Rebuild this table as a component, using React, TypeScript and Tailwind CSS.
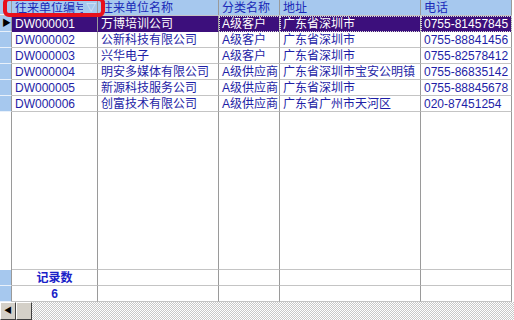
const cols = [86, 121, 61, 141, 91];

const rows = [
	["DW000001", "万博培训公司", "A级客户", "广东省深圳市", "0755-81457845"],
	["DW000002", "公新科技有限公司", "A级客户", "广东省深圳市", "0755-88841456"],
	["DW000003", "兴华电子", "A级客户", "广东省深圳市", "0755-82578412"],
	["DW000004", "明安多媒体有限公司", "A级供应商", "广东省深圳市宝安公明镇", "0755-86835142"],
	["DW000005", "新源科技服务公司", "A级供应商", "广东省深圳市", "0755-88845678"],
	["DW000006", "创富技术有限公司", "A级供应商", "广东省广州市天河区", "020-87451254"],
];

const headers = ["往来单位编号", "往来单位名称", "分类名称", "地址", "电话"];

function Indicator({ blue, active }: { blue: boolean; active?: boolean }) {
	return (
		<div
			className={`w-[12px] shrink-0 h-full flex items-center border-r border-[#9a9a9a] ${
				blue ? "bg-[#a6c8ee] border-b border-b-[#e8f0fa]" : "bg-white"
			}`}
		>
			{active && <span className="text-[9px] leading-none ml-[2px] text-black">▶</span>}
		</div>
	);
}

export default function App() {
	return (
		<div
			className="relative w-[514px] h-[320px] bg-white overflow-hidden text-[12px] leading-none text-[#1e1ea6]"
			style={{ fontFamily: '"Liberation Sans", "Noto Sans CJK SC", sans-serif' }}
		>
			<div className="w-[512px] h-[302px] flex flex-col border-r border-[#b4b4b4]">
				{/* header */}
				<div className="flex h-[16px] bg-[#a6c8ee] border-b border-[#c4c4c4]">
					<Indicator blue />
					{headers.map((h, i) => (
						<div
							key={h}
							style={{ width: cols[i] }}
							className="shrink-0 h-full border-r border-[#9a9a9a] flex items-center pl-[3px] overflow-hidden whitespace-nowrap text-[#1a2ab8]"
						>
							{i === 0 ? (
								<>
									<span className="w-[68px] shrink-0 overflow-hidden">{h}</span>
									<span className="text-[10px] text-[#e8eef8] ml-[3px]">▽</span>
								</>
							) : (
								h
							)}
						</div>
					))}
				</div>
				{/* data rows */}
				{rows.map((r, ri) => {
					const sel = ri === 0;
					return (
						<div key={r[0]} className="flex h-[16px]">
							<Indicator blue active={sel} />
							{r.map((c, ci) => (
								<div
									key={ci}
									style={{ width: cols[ci] }}
									className={`shrink-0 h-full flex items-center pl-[3px] whitespace-nowrap overflow-hidden border-r border-b ${
										sel
											? "bg-[#3c0f7c] text-white border-b-[#3c0f7c] border-r-[#9a9a9a]"
											: "border-r-[#9a9a9a] border-b-[#c4c4c4]"
									} ${sel && ci >= 2 ? "outline-1 outline-dotted outline-[#d8d8d8] -outline-offset-1" : ""}`}
								>
									{c}
								</div>
							))}
						</div>
					);
				})}
				{/* empty area */}
				<div className="flex flex-1">
					<div className="w-[12px] shrink-0 border-r border-[#9a9a9a]" />
					{cols.map((w, i) => (
						<div key={i} style={{ width: w }} className="shrink-0 border-r border-[#9a9a9a] border-b border-b-[#c4c4c4]" />
					))}
				</div>
				{/* footer */}
				{["记录数", "6"].map((t) => (
					<div key={t} className="flex h-[16px] font-bold text-[#1a22c8]">
						<Indicator blue />
						{cols.map((w, i) => (
							<div
								key={i}
								style={{ width: w }}
								className="shrink-0 h-full flex items-center justify-center border-r border-[#9a9a9a] border-b border-b-[#c4c4c4]"
							>
								{i === 0 ? t : ""}
							</div>
						))}
					</div>
				))}
			</div>
			{/* horizontal scrollbar */}
			<div className="flex h-[18px] bg-[repeating-conic-gradient(#c8c8c8_0%_25%,#ffffff_0%_50%)] bg-[length:2px_2px]">
				<div className="w-[16px] h-full bg-[#d4d0c8] border border-t-white border-l-white border-r-[#404040] border-b-[#404040] flex items-center justify-center">
					<span className="text-[8px] text-black">◀</span>
				</div>
				<div className="w-[16px] h-full bg-[#d4d0c8] border border-t-white border-l-white border-r-[#404040] border-b-[#404040]" />
			</div>
			{/* red annotation box */}
			<div className="absolute left-[3px] top-[-3px] w-[102px] h-[20px] border-4 border-solid border-[#e8101c] rounded-[6px]" />
		</div>
	);
}
